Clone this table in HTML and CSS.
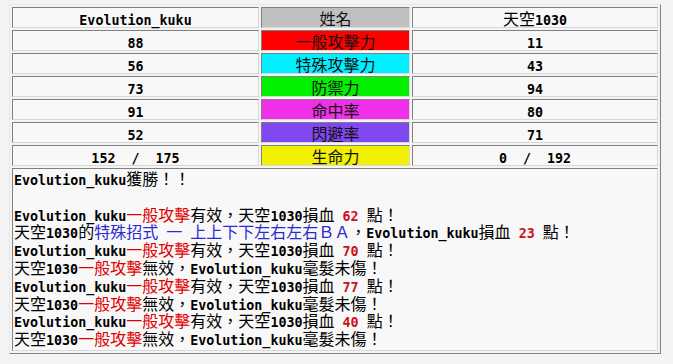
FILE: index.html
```html
<!DOCTYPE html>
<html>
<head>
<meta charset="utf-8">
<link rel="stylesheet" href="styles.css">
</head>
<body>
<table class="battle">
  <colgroup><col class="c-left"><col class="c-mid"><col class="c-right"></colgroup>
  <tr><td><span class="e">Evolution_kuku</span></td><td class="st st-name">姓名</td><td>天空<span class="e">1030</span></td></tr>
  <tr><td><span class="e">88</span></td><td class="st st-red">一般攻擊力</td><td><span class="e">11</span></td></tr>
  <tr><td><span class="e">56</span></td><td class="st st-cyan">特殊攻擊力</td><td><span class="e">43</span></td></tr>
  <tr><td><span class="e">73</span></td><td class="st st-green">防禦力</td><td><span class="e">94</span></td></tr>
  <tr><td><span class="e">91</span></td><td class="st st-pink">命中率</td><td><span class="e">80</span></td></tr>
  <tr><td><span class="e">52</span></td><td class="st st-purple">閃避率</td><td><span class="e">71</span></td></tr>
  <tr><td><span class="e">152&nbsp;&nbsp;/&nbsp;&nbsp;175</span></td><td class="st st-yellow">生命力</td><td><span class="e">0&nbsp;&nbsp;/&nbsp;&nbsp;192</span></td></tr>
  <tr><td colspan="3" class="log"><span class="e">Evolution_kuku</span>獲勝！！<br>
<br>
<span class="e">Evolution_kuku</span><span class="atk">一般攻擊</span>有效，天空<span class="e">1030</span>損血<span class="e"> <span class="dmg">62</span> </span>點！<br>
天空<span class="e">1030</span>的<span class="sp">特殊招式<span class="e"> </span>一<span class="e"> </span>上上下下左右左右ＢＡ</span>，<span class="e">Evolution_kuku</span>損血<span class="e"> <span class="dmg">23</span> </span>點！<br>
<span class="e">Evolution_kuku</span><span class="atk">一般攻擊</span>有效，天空<span class="e">1030</span>損血<span class="e"> <span class="dmg">70</span> </span>點！<br>
天空<span class="e">1030</span><span class="atk">一般攻擊</span>無效，<span class="e">Evolution_kuku</span>毫髮未傷！<br>
<span class="e">Evolution_kuku</span><span class="atk">一般攻擊</span>有效，天空<span class="e">1030</span>損血<span class="e"> <span class="dmg">77</span> </span>點！<br>
天空<span class="e">1030</span><span class="atk">一般攻擊</span>無效，<span class="e">Evolution_kuku</span>毫髮未傷！<br>
<span class="e">Evolution_kuku</span><span class="atk">一般攻擊</span>有效，天空<span class="e">1030</span>損血<span class="e"> <span class="dmg">40</span> </span>點！<br>
天空<span class="e">1030</span><span class="atk">一般攻擊</span>無效，<span class="e">Evolution_kuku</span>毫髮未傷！</td></tr>
</table>
</body>
</html>
```
FILE: styles.css
```css
html, body {
  background: #f4f4f4;
}
body {
  margin: 4px 0 0 9px;
  font-family: "Noto Sans CJK TC", sans-serif;
  font-size: 16px;
  color: #000;
}
.battle {
  table-layout: fixed;
  width: 652px;
  border-collapse: separate;
  border-spacing: 2px;
  border: 1px solid;
  border-color: #e8e8e8 #808080 #808080 #e8e8e8;
}
.c-left { width: 247px; }
.c-mid { width: 149px; }
.c-right { width: 246px; }
.battle td {
  border: 1px solid;
  border-color: #808080 #d8d8d8 #d8d8d8 #808080;
  background: #f8f8f8;
  height: 19px;
  padding: 0;
  line-height: 16px;
  text-align: center;
  white-space: nowrap;
}
.e {
  font-family: "DejaVu Sans Mono", "Liberation Mono", monospace;
  font-weight: bold;
  font-size: 13.33px;
  line-height: 10px;
}
.battle td.st { color: #111; }
.battle td.st-name { background: #c0c0c0; }
.battle td.st-red { background: #ff0000; }
.battle td.st-cyan { background: #00f0ff; }
.battle td.st-green { background: #00f000; }
.battle td.st-pink { background: #f030e8; }
.battle td.st-purple { background: #7f48f0; }
.battle td.st-yellow { background: #f0f000; }
.battle td.log {
  text-align: left;
  height: auto;
  padding: 1px 1px 2px 1px;
  line-height: 17.8px;
}
.atk { color: #e00000; }
.sp { color: #2a2ad0; }
.dmg { color: #cc1020; }
```
